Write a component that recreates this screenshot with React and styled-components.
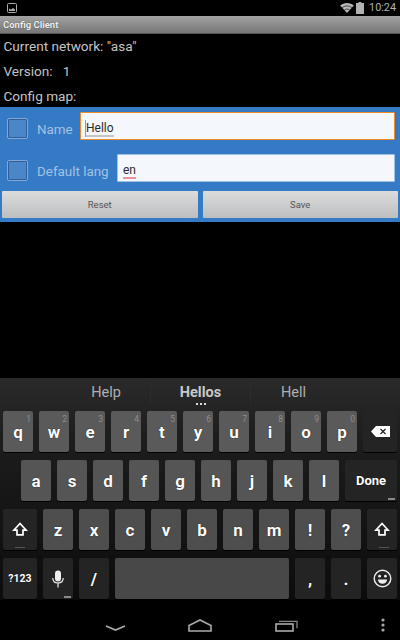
import React from "react";
import styled, { createGlobalStyle } from "styled-components";

const Global = createGlobalStyle`
  html, body { margin: 0; padding: 0; background: #000; }
  #root { width: 400px; height: 640px; overflow: hidden; }
`;
const Screen = styled.div`
  width: 400px; height: 640px; background: #000; display: flex; flex-direction: column;
  font-family: Roboto, "Liberation Sans", sans-serif; overflow: hidden;
`;
const StatusBar = styled.div`
  height: 16px; flex: none; display: flex; align-items: center; justify-content: space-between;
  padding: 0 4px 0 7px; color: #b4b4b4;
`;
const StatusRight = styled.div`display: flex; align-items: center; gap: 2px;`;
const Clock = styled.span`font-size: 10.8px; line-height: 16px; color: #b0b0b0; margin-left: 3px;`;
const TitleBar = styled.div`
  height: 18px; flex: none; box-sizing: border-box; padding-left: 3px; display: flex; align-items: center;
  background: linear-gradient(#a3a3a3, #767676); border-bottom: 1px solid #555;
  font-size: 9.5px; font-weight: 700; color: #f0f0f0; text-shadow: 0 0 1px #333;
`;
const Info = styled.div`
  height: 73px; flex: none; box-sizing: border-box; padding: 0 0 0 3.5px; display: flex; flex-direction: column;
`;
const InfoLine = styled.div`
  height: 25px; line-height: 25px; font-size: 13.6px; color: #c4c4c4; white-space: pre;
`;
const Panel = styled.div`
  height: 115px; flex: none; box-sizing: border-box; background: #357ac4; padding: 5px 2px 0;
  display: flex; flex-direction: column;
`;
const Row = styled.div`height: 28px; margin-bottom: ${p => p.$mb}px; display: flex; align-items: center; padding-left: 5px;`;
const Check = styled.div`
  width: 21px; height: 21px; flex: none; border-radius: 2px; box-sizing: border-box; margin-top: 5px;
  background: #4b86c8; border: 1px solid #7fa8d8; box-shadow: inset 0 0 0 1px #2f5f98;
`;
const FieldLabel = styled.div`
  margin: 6px 0 0 9px; font-size: 13.4px; color: #a3c1e4; white-space: nowrap; width: ${p => p.$w}px; flex: none;
`;
const Field = styled.div`
  flex: 1; height: 28px; box-sizing: border-box; margin-right: 3px; padding: 5px 0 0 5px;
  background: #f4f7fc; display: flex; align-items: center;
  font-size: 12px; color: #2b2b2b; border-radius: 1px;
  border: ${p => p.$focus ? "1.5px solid #f08a24" : "1px solid #9fbfe3"};
`;
const Word = styled.span`
  border-bottom: 2px solid ${p => p.$c}; line-height: 14px; position: relative;
`;
const Caret = styled.span`
  position: absolute; left: -1px; top: -1px; bottom: -2px; width: 1px; background: #9a9a9a;
`;
const Buttons = styled.div`display: flex; gap: 5px;`;
const Btn = styled.div`
  flex: 1; height: 27px; display: flex; align-items: center; justify-content: center;
  background: linear-gradient(#dcdcdc, #bcbec0); color: #555; font-size: 9.5px; border-radius: 1px;
`;
const Spacer = styled.div`flex: 1;`;
const Keyboard = styled.div`
  height: 222px; flex: none; box-sizing: border-box; padding: 0 3px;
  background: linear-gradient(#2a2a2a, #1c1c1c 30%, #0c0c0c); display: flex; flex-direction: column; gap: 8px;
`;
const Suggestions = styled.div`
  height: 25px; box-sizing: border-box; margin: 0 -3px; padding-top: 5px; display: grid; grid-template-columns: 150px 100px 150px; flex: none;
`;
const Suggestion = styled.div`
  position: relative; height: 20px; text-align: center; font-size: 14.5px; line-height: 20px; color: ${p => p.$b ? "#c8c8c8" : "#b0b0b0"};
  font-weight: ${p => p.$b ? 700 : 400}; padding: 0 ${p => p.$pr || 0}px 0 ${p => p.$pl || 0}px;
  ${p => p.$sep && "border-left: 1px solid #2c2c2c;"}
`;
const Dots = styled.span`
  position: absolute; left: 50%; margin-left: -5px; top: 20px; width: 10px; height: 2px;
  background: repeating-linear-gradient(90deg, #ddd 0 2px, transparent 2px 4px);
`;
const KeyRow = styled.div`display: flex; gap: 6px; height: 41px; flex: none; padding-left: ${p => p.$pl || 0}px;`;
const Key = styled.div`
  position: relative; width: ${p => p.$w || 30}px; height: 41px; flex: none; box-sizing: border-box; border-radius: 2px;
  background: ${p => p.$dark ? "#242424" : (p.$bg || "#5a5a5a")};
  color: #fff; font-size: ${p => p.$fs || 17}px; font-weight: 700; display: flex; align-items: center; justify-content: center;
  box-shadow: 0 1px 0 #000; text-shadow: 0 0 1px #000;
`;
const Hint = styled.span`
  position: absolute; top: 3px; right: 2px; font-size: 8.5px; font-weight: 400; color: #8e8e8e; line-height: 10px; text-shadow: none;
`;
const More = styled.span`
  position: absolute; right: 2px; bottom: 1px; width: 7px; height: 2px; background: #8a8a8a;
`;
const ShiftBar = styled.span`
  position: absolute; left: 12px; bottom: 2px; width: 10px; height: 1px; background: #555;
`;
const NavBar = styled.div`
  height: 40px; flex: none; display: flex; align-items: flex-end; padding: 0 0 8px 105px; box-sizing: border-box;
`;
const NavSlot = styled.div`
  margin-left: ${p => p.$ml || 0}px; display: flex; flex: none;
`;

const Wifi = () => (
  <svg width="14" height="10" viewBox="0 0 15 11" fill="#b8b8b8"><path d="M7.5 11 0 2.8C2 1 4.6 0 7.5 0S13 1 15 2.8z" /><path d="M2.2 5.2C3.6 4 5.4 3.3 7.5 3.3s3.900.7 5.300 1.900M4.600 7.700c.8-.6 1.800-1 2.900-1s2.100.4 2.900 1" stroke="#000" strokeWidth=".7" fill="none" /></svg>
);
const Battery = () => (
  <svg width="8" height="12" viewBox="0 0 8 12" fill="#b0b0b0"><path d="M2.500 0h3v1H8v11H0V1h2.500z" /></svg>
);
const Picture = () => (
  <svg width="10" height="10" viewBox="0 0 10 10" fill="none"><rect x=".5" y=".5" width="9" height="9" rx="1" stroke="#a8a8a8" /><path d="M2 8V5.500l2 1 2-1.500 2 1.500V8z" fill="#a8a8a8" /></svg>
);
const Shift = () => (
  <svg width="16" height="15" viewBox="0 0 16 15" fill="none" stroke="#fff" strokeWidth="1.7"><path d="M8 1.500 1.800 8.200H5v4.600h6V8.200h3.200z" /></svg>
);
const Backspace = () => (
  <svg width="19" height="11" viewBox="0 0 19 11"><path d="M5 0h14v11H5L0 5.500z" fill="#fff" /><path d="M9.500 3l5 5M14.500 3l-5 5" stroke="#222" strokeWidth="1.300" /></svg>
);
const Mic = () => (
  <svg width="12" height="18" viewBox="0 0 12 18" fill="none"><rect x="3" y="0.500" width="6" height="11" rx="3" fill="#eee" /><path d="M.8 8c0 3 2 5 5.200 5s5.200-2 5.200-5M6 13v4.500" stroke="#eee" strokeWidth="1.200" /></svg>
);
const Smiley = () => (
  <svg width="19" height="19" viewBox="0 0 19 19" fill="none"><circle cx="9.500" cy="9.500" r="8.300" stroke="#eee" strokeWidth="1.400" /><circle cx="6.600" cy="7.200" r="1.400" fill="#eee" /><circle cx="12.400" cy="7.200" r="1.400" fill="#eee" /><path d="M4.800 10.600h9.400c-.4 2.800-2.300 4.200-4.700 4.200s-4.300-1.400-4.700-4.200z" fill="#eee" /></svg>
);
const NavBack = () => (
  <svg width="21" height="8" viewBox="0 0 21 8" fill="none"><path d="M1 2 10.500 6 20 2" stroke="#aaa" strokeWidth="1.800" /></svg>
);
const NavHome = () => (
  <svg width="24" height="13" viewBox="0 0 24 13" fill="none"><path d="M1 12V6.500L12 1l11 5.500V12z" stroke="#aaa" strokeWidth="1.600" /></svg>
);
const NavRecents = () => (
  <svg width="23" height="12" viewBox="0 0 23 12" fill="none"><rect x="1" y="4" width="17" height="7" stroke="#aaa" strokeWidth="1.600" /><path d="M4 1.300h18v7" stroke="#888" strokeWidth="1.300" /></svg>
);
const NavMenu = () => (
  <svg width="4" height="14" viewBox="0 0 4 14" fill="#aaa"><circle cx="2" cy="2" r="1.600" /><circle cx="2" cy="7" r="1.600" /><circle cx="2" cy="12" r="1.600" /></svg>
);

const row1 = [["q", 1], ["w", 2], ["e", 3], ["r", 4], ["t", 5], ["y", 6], ["u", 7], ["i", 8], ["o", 9], ["p", 0]];

export default function App() {
  return (
    <Screen>
      <Global />
      <StatusBar>
        <Picture />
        <StatusRight><Wifi /><Battery /><Clock>10:24</Clock></StatusRight>
      </StatusBar>
      <TitleBar>Config Client</TitleBar>
      <Info>
        <InfoLine>Current network: "asa"</InfoLine>
        <InfoLine>Version:   1</InfoLine>
        <InfoLine>Config map:</InfoLine>
      </Info>
      <Panel>
        <Row $mb={14}>
          <Check />
          <FieldLabel $w={43}>Name</FieldLabel>
          <Field $focus><Word $c="#c4c4c4"><Caret />Hello</Word></Field>
        </Row>
        <Row $mb={9}>
          <Check />
          <FieldLabel $w={80}>Default lang</FieldLabel>
          <Field><Word $c="#ee8f9f">en</Word></Field>
        </Row>
        <Buttons>
          <Btn>Reset</Btn>
          <Btn>Save</Btn>
        </Buttons>
      </Panel>
      <Spacer />
      <Keyboard>
        <Suggestions>
          <Suggestion $pl={62}>Help</Suggestion>
          <Suggestion $b $sep>Hellos<Dots /></Suggestion>
          <Suggestion $sep $pr={64}>Hell</Suggestion>
        </Suggestions>
        <KeyRow>
          {row1.map(([k, n]) => <Key key={k}>{k}<Hint>{n}</Hint></Key>)}
          <Key $dark $w={34}><Backspace /></Key>
        </KeyRow>
        <KeyRow $pl={18}>
          {"asdfghjkl".split("").map(k => <Key key={k} $bg="#555">{k}</Key>)}
          <Key $dark $w={52} $fs={13}>Done<More /></Key>
        </KeyRow>
        <KeyRow>
          <Key $dark $w={34}><Shift /><ShiftBar /></Key>
          {"zxcvbnm!?".split("").map(k => <Key key={k} $bg="#4e4e4e">{k}</Key>)}
          <Key $dark $w={30}><Shift /><ShiftBar /></Key>
        </KeyRow>
        <KeyRow>
          <Key $dark $w={34} $fs={10.5}>?123</Key>
          <Key $dark><Mic /><More /></Key>
          <Key $dark>/</Key>
          <Key $w={174} $bg="#484848" />
          <Key $dark>,</Key>
          <Key $dark>.</Key>
          <Key $dark><Smiley /></Key>
        </KeyRow>
      </Keyboard>
      <NavBar>
        <NavSlot><NavBack /></NavSlot>
        <NavSlot $ml={62}><NavHome /></NavSlot>
        <NavSlot $ml={63}><NavRecents /></NavSlot>
        <NavSlot $ml={83}><NavMenu /></NavSlot>
      </NavBar>
    </Screen>
  );
}
